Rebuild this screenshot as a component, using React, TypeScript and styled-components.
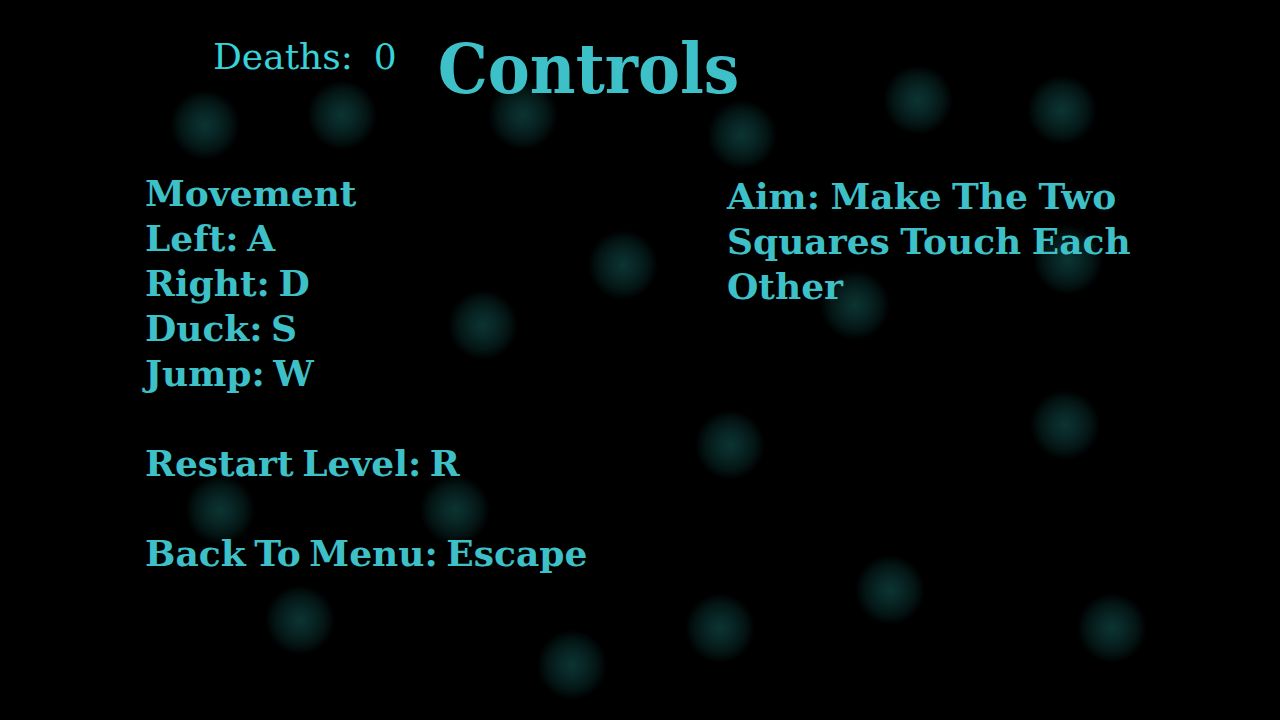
import React from "react";
import styled, { createGlobalStyle } from "styled-components";

const Global = createGlobalStyle`
  html, body { margin: 0; padding: 0; background: #000; }
  #root { width: 1280px; height: 720px; }
`;

const Screen = styled.div`
  position: relative;
  width: 1280px;
  height: 720px;
  overflow: hidden;
  background: #000;
  font-family: "DejaVu Serif", "Liberation Serif", serif;
`;

const Glow = styled.div`
  position: absolute;
  width: 70px;
  height: 70px;
  margin: -35px 0 0 -35px;
  border-radius: 50%;
  background: radial-gradient(circle closest-side, #0b3432 0%, #082726 35%, #041615 70%, rgba(0, 0, 0, 0) 100%);
`;

const Content = styled.div`
  position: relative;
  display: flex;
  flex-direction: column;
`;

const Header = styled.header`
  display: flex;
  align-items: flex-start;
  padding: 33px 0 0 213px;
  gap: 41px;
  height: 110px;
  box-sizing: border-box;
`;

const Deaths = styled.div`
  color: #38d2da;
  font-size: 36px;
  font-weight: 400;
  line-height: 1;
  margin-top: 6px;
  word-spacing: -1px;
  white-space: pre;
`;

const Title = styled.h1`
  margin: 0;
  color: #3ec0c8;
  font-family: "DejaVu Serif Condensed", "DejaVu Serif", serif;
  font-size: 70px;
  font-weight: 700;
  line-height: 1;
  margin-top: 1px;
`;

const Columns = styled.div`
  display: grid;
  grid-template-columns: 582px 1fr;
  padding: 61px 0 0 145px;
`;

const Column = styled.div`
  display: flex;
  flex-direction: column;
`;

const Line = styled.div<{ $gap?: boolean }>`
  color: #3ec0c8;
  font-size: 36px;
  font-weight: 700;
  line-height: 45px;
  word-spacing: -4px;
  margin-top: ${(p) => (p.$gap ? "45px" : "0")};
  white-space: nowrap;
`;

const Para = styled.p`
  margin: 3px 0 0 0;
  color: #3ec0c8;
  font-size: 36px;
  font-weight: 700;
  line-height: 45px;
  word-spacing: -2px;
  width: 420px;
`;

const glows: [number, number][] = [
  [205, 125], [342, 115], [523, 115], [742, 135], [918, 100], [1062, 110],
  [623, 265], [483, 325], [855, 305], [1068, 260], [730, 445], [1065, 425],
  [220, 510], [455, 510], [890, 590], [300, 620], [720, 628], [1112, 628], [572, 665],
];

export default function App() {
  return (
    <>
      <Global />
      <Screen>
        {glows.map(([x, y], i) => (
          <Glow key={i} style={{ left: x, top: y }} />
        ))}
        <Content>
          <Header>
            <Deaths>{"Deaths:  0"}</Deaths>
            <Title>Controls</Title>
          </Header>
          <Columns>
            <Column>
              <Line>Movement</Line>
              <Line>Left: A</Line>
              <Line>Right: D</Line>
              <Line>Duck: S</Line>
              <Line>Jump: W</Line>
              <Line $gap>Restart Level: R</Line>
              <Line $gap>Back To Menu: Escape</Line>
            </Column>
            <Column>
              <Para>Aim: Make The Two Squares Touch Each Other</Para>
            </Column>
          </Columns>
        </Content>
      </Screen>
    </>
  );
}
